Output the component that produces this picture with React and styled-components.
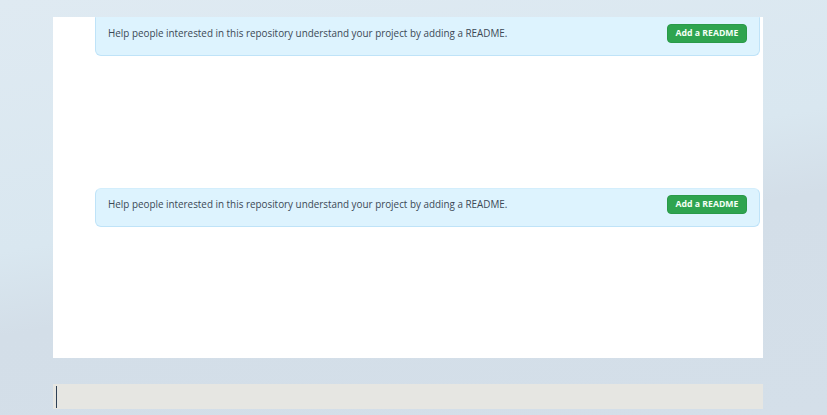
import React from "react";
import styled, { createGlobalStyle } from "styled-components";

const GlobalStyle = createGlobalStyle`
  html, body {
    margin: 0;
    padding: 0;
  }
  body {
    width: 827px;
    height: 415px;
    overflow: hidden;
    background: linear-gradient(170deg, #dfeaf2 0%, #d9e7f0 45%, #d3dee8 60%, #d4dfe9 100%);
    font-family: "Open Sans", "Noto Sans", sans-serif;
  }
`;

const Page = styled.div`
  display: flex;
  flex-direction: column;
  padding: 17px 0 0 53px;
  width: 710px;
`;

const Panel = styled.div`
  background: #ffffff;
  height: 341px;
  padding: 0 3px 0 42px;
  display: flex;
  flex-direction: column;
  gap: 132px;
`;

const Banner = styled.div`
  height: 39px;
  box-sizing: border-box;
  background: #ddf3fe;
  border: 1px solid #bfe3f8;
  border-top-color: ${(p) => (p.$clipped ? "#ddf3fe" : "#d3eefc")};
  border-radius: ${(p) => (p.$clipped ? "0 0 6px 6px" : "6px")};
  display: flex;
  align-items: center;
  justify-content: space-between;
  padding: 0 12px 7px 12px;
`;

const Message = styled.span`
  font-family: "Open Sans", "Noto Sans", sans-serif;
  font-size: 9.87px;
  color: #3b4855;
`;

const AddButton = styled.button`
  background: #2ea44f;
  border: 1px solid #2a9a49;
  border-radius: 4px;
  color: #f4fff6;
  font-family: "Open Sans", "Noto Sans", sans-serif;
  font-weight: 700;
  font-size: 8.7px;
  height: 19px;
  width: 80px;
  padding: 0;
  display: flex;
  align-items: center;
  justify-content: center;
  cursor: pointer;
`;

const Footer = styled.div`
  margin-top: 26px;
  height: 25px;
  background: #e6e6e2;
  display: flex;
  align-items: center;
  padding-left: 3px;
`;

const Caret = styled.span`
  width: 1px;
  height: 22px;
  background: #2d4055;
`;

function ReadmeBanner({ clipped }) {
  return (
    <Banner $clipped={clipped}>
      <Message>
        Help people interested in this repository understand your project by adding a README.
      </Message>
      <AddButton>Add a README</AddButton>
    </Banner>
  );
}

export default function App() {
  return (
    <>
      <GlobalStyle />
      <Page>
        <Panel>
          <ReadmeBanner clipped />
          <ReadmeBanner />
        </Panel>
        <Footer>
          <Caret />
        </Footer>
      </Page>
    </>
  );
}
